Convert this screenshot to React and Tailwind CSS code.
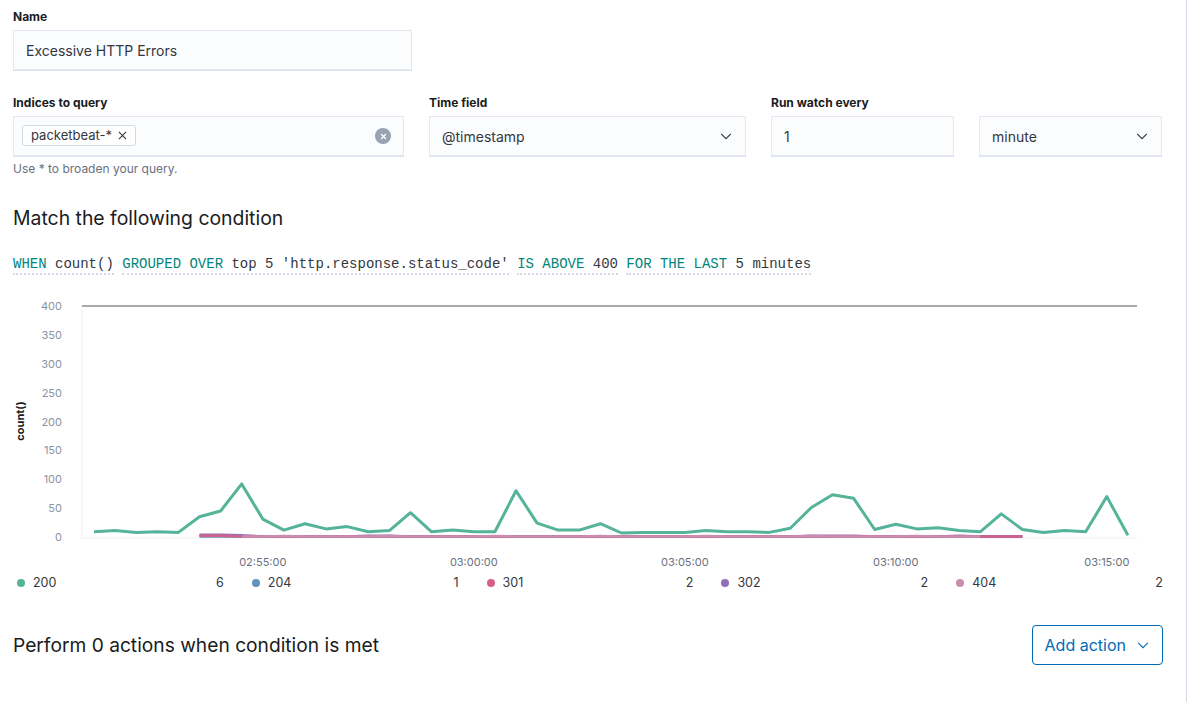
import React from "react";

const green = [9,11,8,9,8,35,45,92,31,12,23,14,18,9,11,42,9,12,9,9,80,24,12,12,23,7,8,8,8,11,9,9,8,15,51,73,67,13,22,14,16,11,9,40,13,8,11,9,70,3];
const X = (i) => 94 + i * 21.1;
const Y = (v) => 536 - v * 0.5775;
const pts = (arr, start = 0) => arr.map((v, k) => `${X(start + k).toFixed(1)},${Y(v).toFixed(1)}`).join(" ");

const blue = Array.from({ length: 40 }, () => 1);
const purple = [4,4,3,1,1,1,1,1,2,2,1,1,1,1,1,1,1,1,1,1,1,1,1,1,1,1,1,1,1,2,2,2,1,1,1,1,2,1,1,1];
const red = Array.from({ length: 40 }, (_, k) => (k < 2 ? 2 : 1));
const pink = Array.from({ length: 36 }, (_, k) => (k % 5 === 2 ? 1.5 : 1));

const Chevron = ({ className = "" }) => (
  <svg width="14" height="14" viewBox="0 0 16 16" className={className} fill="none" stroke="currentColor" strokeWidth="1.3">
    <path d="M2.5 5.5 L8 11 L13.5 5.5" />
  </svg>
);

const inputCls = "h-10 bg-[#fbfcfd] border border-[#e3e8f2] shadow-[0_1px_0_0_#dde2ec] flex items-center text-[14px] text-[#343741]";

const Label = ({ children }) => (
  <div className="text-[12px] font-bold leading-[18px] text-[#1a1c21] mb-[4px]">{children}</div>
);

const Kw = ({ children }) => <span className="text-[#00857c]">{children}</span>;
const Expr = ({ children }) => (
  <span className="border-b-2 border-dotted border-[#d3dae6] pb-[1px]">{children}</span>
);

const legend = [
  { c: "#54b399", n: "200", v: "6" },
  { c: "#6092c0", n: "204", v: "1" },
  { c: "#d36086", n: "301", v: "2" },
  { c: "#9170b8", n: "302", v: "2" },
  { c: "#ca8eae", n: "404", v: "2" },
];

export default function App() {
  return (
    <div className="w-[1187px] h-[702px] border-r border-[#d3dae6] bg-white font-['Inter',sans-serif] text-[#343741]">
      <div className="pl-[13px] pr-[24px] pt-[8px] w-[1187px]">
        <Label>Name</Label>
        <div className={`${inputCls} w-[399px] pl-[12px]`}>Excessive HTTP Errors</div>

        <div className="flex mt-[24px] gap-[25px]">
          <div className="w-[391px]">
            <Label>Indices to query</Label>
            <div className={`${inputCls} px-[8px] justify-between`}>
              <span className="h-[21px] -mt-[1px] flex items-center gap-[6px] px-[8px] border border-[#d3dae6] rounded-[3px] bg-white text-[13px] text-[#343741]">
                packetbeat-*
                <svg width="9" height="9" viewBox="0 0 10 10" stroke="#343741" strokeWidth="1.2"><path d="M1 1 L9 9 M9 1 L1 9" /></svg>
              </span>
              <span className="w-4 h-4 rounded-full bg-[#98a2b3] flex items-center justify-center mr-[4px]">
                <svg width="7" height="7" viewBox="0 0 10 10" stroke="#fff" strokeWidth="1.8"><path d="M1.5 1.5 L8.5 8.5 M8.5 1.5 L1.5 8.5" /></svg>
              </span>
            </div>
            <div className="text-[12px] leading-[16px] text-[#69707d] mt-[5px]">Use * to broaden your query.</div>
          </div>
          <div className="w-[317px]">
            <Label>Time field</Label>
            <div className={`${inputCls} pl-[12px] pr-[12px] justify-between`}>
              <span>@timestamp</span>
              <Chevron className="text-[#343741]" />
            </div>
          </div>
          <div className="w-[183px]">
            <Label>Run watch every</Label>
            <div className={`${inputCls} pl-[12px]`}>1</div>
          </div>
          <div className="w-[183px]">
            <div className="h-[22px]" />
            <div className={`${inputCls} pl-[12px] pr-[12px] justify-between`}>
              <span>minute</span>
              <Chevron className="text-[#343741]" />
            </div>
          </div>
        </div>

        <div className="mt-[29px] text-[19.4px] leading-[24px] text-[#1a1c21]">Match the following condition</div>

        <div className="mt-[24px] font-['Liberation_Mono',monospace] text-[14px] leading-[20px] text-[#343741] whitespace-pre">
          <Expr><Kw>WHEN</Kw> count()</Expr> <Expr><Kw>GROUPED OVER</Kw> top 5 'http.response.status_code'</Expr> <Expr><Kw>IS ABOVE</Kw> 400</Expr> <Expr><Kw>FOR THE LAST</Kw> 5 minutes</Expr>
        </div>

        <svg width="1150" height="280" viewBox="13 290 1150 280" className="block mt-[17px]">
          <line x1="82" y1="305" x2="82" y2="537" stroke="#eef0f3" strokeWidth="1" />
          <line x1="82" y1="537" x2="1137" y2="537" stroke="#eef0f3" strokeWidth="1" />
          {[0, 50, 100, 150, 200, 250, 300, 350, 400].map((v) => (
            <text key={v} x="62" y={Y(v) + 4} textAnchor="end" fontSize="11" fill="#8a93a2" fontFamily="Inter">{v}</text>
          ))}
          <text transform="translate(24 420) rotate(-90)" textAnchor="middle" fontSize="11" fontWeight="700" fill="#1a1c21" fontFamily="Inter">count()</text>
          {[["02:55:00", 8], ["03:00:00", 18], ["03:05:00", 28], ["03:10:00", 38], ["03:15:00", 48]].map(([t, i]) => (
            <text key={t} x={X(i)} y="565" textAnchor="middle" fontSize="11" fill="#69707d" fontFamily="Inter">{t}</text>
          ))}
          <line x1="82" y1="305" x2="1137" y2="305" stroke="#a9a9a9" strokeWidth="2" />
          <polyline points={pts(blue, 5)} fill="none" stroke="#6092c0" strokeWidth="2.5" strokeLinejoin="round" />
          <polyline points={pts(purple, 5)} fill="none" stroke="#9170b8" strokeWidth="2.5" strokeLinejoin="round" />
          <polyline points={pts(red, 5)} fill="none" stroke="#d36086" strokeWidth="2.5" strokeLinejoin="round" />
          <polyline points={pts(pink, 7)} fill="none" stroke="#ca8eae" strokeWidth="2.5" strokeLinejoin="round" />
          <polyline points={pts(green)} fill="none" stroke="#54b399" strokeWidth="3" strokeLinejoin="round" />
        </svg>

        <div className="flex gap-[24px] mt-[2px]">
          {legend.map((l) => (
            <div key={l.n} className="flex-1 flex items-center text-[12.5px] leading-[20px] text-[#343741]">
              <span className="w-2 h-2 rounded-full ml-[4px]" style={{ backgroundColor: l.c }} />
              <span className="ml-[8px]">{l.n}</span>
              <span className="ml-auto">{l.v}</span>
            </div>
          ))}
        </div>

        <div className="flex items-center justify-between mt-[32px]">
          <div className="text-[19.2px] leading-[24px] text-[#1a1c21]">Perform 0 actions when condition is met</div>
          <button className="h-10 px-[12px] flex items-center gap-[10px] border border-[#006bb8] rounded-[4px] text-[#006bb8] text-[16px] bg-white">
            Add action
            <Chevron className="text-[#006bb8]" />
          </button>
        </div>
      </div>
    </div>
  );
}
